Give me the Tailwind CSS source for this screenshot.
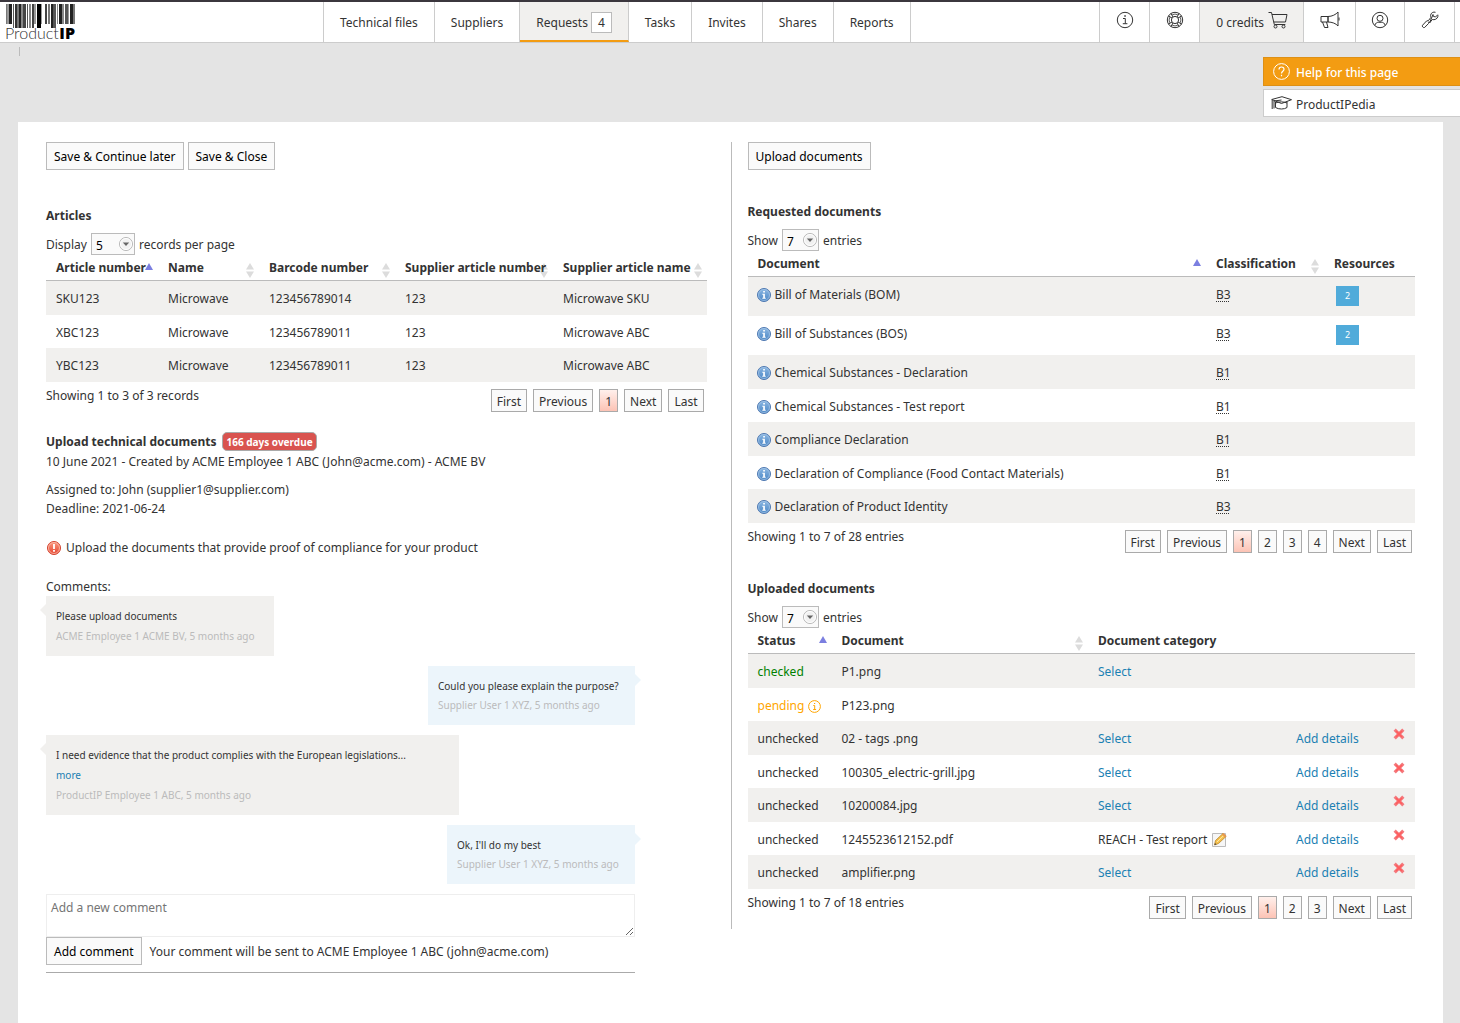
<!DOCTYPE html>
<html lang="en">
<head>
  <meta charset="UTF-8" />
  <meta name="viewport" content="width=device-width, initial-scale=1.0"/>
  <title>ProductIP | Requests</title>
  <script src="https://cdn.jsdelivr.net/npm/@tailwindcss/browser@4"></script>
</head>
<body class="min-h-screen flex flex-col bg-[#e4e4e4] text-[#333] text-[12px] leading-5 font-['Noto_Sans','Open_Sans',sans-serif]">

<!-- SHARED ICONS -->
<svg class="absolute w-0 h-0" aria-hidden="true">
  <defs>
    <linearGradient id="blueFill" x1="0" y1="0" x2="0" y2="1">
      <stop offset="0" stop-color="#8db8e3"/><stop offset="1" stop-color="#4a86c5"/>
    </linearGradient>
    <linearGradient id="redFill" x1="0" y1="0" x2="0" y2="1">
      <stop offset="0" stop-color="#fb9a80"/><stop offset="1" stop-color="#e5432f"/>
    </linearGradient>
  </defs>
  <symbol id="info" viewBox="0 0 14 14">
    <circle cx="7" cy="7" r="6.5" fill="url(#blueFill)" stroke="#4f78b0"/>
    <circle cx="7" cy="7" r="5.5" fill="none" stroke="#a9c8e8" stroke-width=".7"/>
    <path d="M6.2 3h1.7v1.6H6.2zM5.3 5.700h2.600v4h.8v1H5.300v-1h.9v-3h-.9z" fill="#fff"/>
  </symbol>
  <symbol id="sort" viewBox="0 0 8 15">
    <path d="M4 0l4 6.500H0zM0 8.500h8L4 15z" fill="#dcdcdc"/>
  </symbol>
  <symbol id="sortUp" viewBox="0 0 8 15">
    <path d="M4 0l4 7H0z" fill="#7b7fe0"/>
  </symbol>
  <symbol id="selectArrow" viewBox="0 0 14 14">
    <circle cx="7" cy="7" r="6.500" fill="#f1f1f1" stroke="#b5b5b5"/>
    <circle cx="7" cy="7" r="5.500" fill="none" stroke="#fff"/>
    <path d="M3.800 5.500h6.400L7 9z" fill="#666"/>
  </symbol>
  <symbol id="cross" viewBox="0 0 12 12">
    <path d="M2.800 2.800l6.400 6.400M9.200 2.800L2.800 9.200" stroke="#f4787c" stroke-width="3.200" stroke-linecap="square"/>
    <path d="M3 3l6 6M9 3L3 9" stroke="#ff5d5d" stroke-width="1.600"/>
  </symbol>
</svg>

<!-- TOP BAR -->
<header class="flex h-[43px] bg-white border-t-2 border-t-[#3b373e] border-b border-b-[#ccc]">
  <a href="#" class="w-[323px] shrink-0 pl-[5px] pt-[2px]">
    <svg width="80" height="38" viewBox="0 0 80 38" role="img" aria-label="ProductIP">
      <g id="bars"></g>
      <text x="0" y="35" font-size="16" font-weight="300" fill="#333" font-family="Lato">Product</text>
      <text x="70" y="35" text-anchor="end" font-size="16" font-weight="800" fill="#000" font-family="Open Sans">IP</text>
    </svg>
  </a>
  <nav class="flex border-l border-[#ccc]">
    <a href="#" class="flex items-center px-4 pt-px border-r border-[#ccc]">Technical files</a>
    <a href="#" class="flex items-center px-4 pt-px border-r border-[#ccc]">Suppliers</a>
    <a href="#" class="flex items-center gap-[3px] px-4 pt-[3px] border-r border-r-[#ccc] border-b-2 border-b-[#f39c12] bg-[#f1f0ee]">Requests <span class="border border-[#bbb] bg-white px-[6px] leading-[19px]">4</span></a>
    <a href="#" class="flex items-center px-4 pt-px border-r border-[#ccc]">Tasks</a>
    <a href="#" class="flex items-center px-4 pt-px border-r border-[#ccc]">Invites</a>
    <a href="#" class="flex items-center px-4 pt-px border-r border-[#ccc]">Shares</a>
    <a href="#" class="flex items-center px-4 pt-px border-r border-[#ccc]">Reports</a>
  </nav>
  <div class="ml-auto mr-[5px] flex border-l border-[#ccc]">
    <a href="#" aria-label="Info" class="flex w-[50px] justify-center pt-[9px] border-r border-[#ccc]">
      <svg class="w-[18px] h-[18px]" viewBox="0 0 18 18" fill="none" stroke="#333"><circle cx="9" cy="9" r="7.700"/><path d="M7 7.500h2.300v5M6.800 12.700h4.600"/><path d="M8.300 4.300h1.500v1.500H8.300z" fill="#333" stroke="none"/></svg>
    </a>
    <a href="#" aria-label="Support" class="flex w-[50px] justify-center pt-[9px] border-r border-[#ccc]">
      <svg class="w-[18px] h-[18px]" viewBox="0 0 18 18" fill="none" stroke="#333"><circle cx="9" cy="9" r="7.700"/><circle cx="9" cy="9" r="3.600"/><path d="M5 2.500l2 3.500M2.500 5L6 7M13 2.500L11 6M15.500 5L12 7M5 15.500L7 12M2.500 13L6 11M13 15.500L11 12M15.500 13L12 11"/><path d="M6.200 3.800a6 6 0 0 1 5.600 0M6.200 14.200a6 6 0 0 0 5.600 0M3.800 6.200a6 6 0 0 0 0 5.600M14.200 6.200a6 6 0 0 1 0 5.600" stroke-width=".8"/></svg>
    </a>
    <a href="#" class="flex gap-1 pl-4 pr-[15px] pt-[9px] border-r border-[#ccc] bg-[#f1f0ee]"><span class="pt-[2px]">0 credits</span>
      <svg class="w-5 h-[18px]" viewBox="0 0 20 18" fill="none" stroke="#333"><path d="M.500 1.500h3l2.800 12h11M4 3.500h15l-1.500 7.500H5.800"/><circle cx="7.500" cy="15.500" r="1.500"/><circle cx="15.500" cy="15.500" r="1.500"/></svg>
    </a>
    <a href="#" aria-label="News" class="flex w-[52px] justify-center pt-[9px] border-r border-[#ccc]">
      <svg class="w-5 h-[18px]" viewBox="0 0 20 18" fill="none" stroke="#333"><path d="M8 5.500H1v5.500h7M8 5.500C12 5.500 16 3.500 18 1v14c-2-2.500-6-4-10-4zM19 6.500v3M2.500 11l2 5.500h3.500L6.500 11M8 5.500V11"/></svg>
    </a>
    <a href="#" aria-label="Account" class="flex w-[49px] justify-center pt-[9px] border-r border-[#ccc]">
      <svg class="w-[18px] h-[18px]" viewBox="0 0 18 18" fill="none" stroke="#333"><circle cx="9" cy="9" r="7.700"/><circle cx="9" cy="7.300" r="3"/><path d="M3.800 14.500c.5-2.500 2.400-3.200 3.400-3.200h3.600c1 0 2.900.7 3.400 3.200"/></svg>
    </a>
    <a href="#" aria-label="Settings" class="flex w-[50px] justify-center pt-[9px] border-r border-[#ccc]">
      <svg class="w-[18px] h-[18px]" viewBox="0 0 18 18" fill="none" stroke="#333"><path d="M14.500 1.300c-2-.8-4.700.5-4.900 3 0 .9 0 1.500.3 2.100L7.500 9.500l-2 .5-4 4.300c-.8.900.9 3 2.100 2.200L7.500 12.500l.5-2M8.500 12l2.800-3.500c2 .8 5.200-.5 5.600-3.100.1-.7 0-1-.2-1.600l-2.200 2.200-2.200-.7-.3-1.800z"/></svg>
    </a>
  </div>
</header>

<!-- HELP LINKS -->
<div class="flex justify-between h-[79px] pl-[18px]">
  <span class="mt-1 ml-px w-px h-[9px] bg-[#bbb]"></span>
  <div class="w-[197px] mt-[14px] flex flex-col gap-[3px]">
    <a href="#" class="flex items-center gap-[6px] h-[29px] pl-[9px] border border-r-0 border-[#dd9016] bg-[#f39c12] text-white font-medium">
      <svg class="w-[17px] h-[17px]" viewBox="0 0 17 17" fill="none" stroke="#fff"><circle cx="8.500" cy="8.500" r="7.900"/><path d="M6 6.500c0-3.300 5-3.300 5-.3 0 2-2.500 2-2.500 4.300M8.500 11.800v1.500" stroke-width="1.200"/></svg>
      <span class="pt-[2px]">Help for this page</span>
    </a>
    <a href="#" class="flex items-center gap-1 h-7 pl-[7px] border border-r-0 border-[#ccc] bg-white">
      <svg class="w-[21px] h-[14px]" viewBox="0 0 21 14" fill="none" stroke="#333"><path d="M.700 3.500L11 .700l9.500 3L10.500 7.500zM4.500 6v5.500c3 2 9 2 11.500 0V5.500M4.500 7c3-1.500 8.500-1.500 11.500 0M1.200 4v9M3 5v7.500M3 5l7.500-1"/></svg>
      <span class="pt-[3px]">ProductIPedia</span>
    </a>
  </div>
</div>

<!-- CONTENT -->
<main class="flex-1 flex items-start ml-[18px] mr-[17px] px-7 py-5 bg-white">

  <!-- Left column -->
  <div class="w-1/2 pr-6">
    <div class="flex gap-1">
      <button class="h-7 px-[7px] pt-[2px] border border-[#bbb] bg-[#fafafa] text-black">Save &amp; Continue later</button>
      <button class="h-7 px-[7px] pt-[2px] border border-[#bbb] bg-[#fafafa] text-black">Save &amp; Close</button>
    </div>

    <h3 class="mt-9 font-bold">Articles</h3>
    <label class="flex items-end gap-1 mt-[7px] h-[22px]">Display
      <span class="relative flex">
        <select class="appearance-none w-11 h-[22px] pl-1 pt-[2px] border border-[#bbb] bg-[#fafafa] text-black"><option>5</option><option>10</option><option>25</option></select>
        <svg class="absolute right-[2px] top-1 w-[14px] h-[14px] pointer-events-none"><use href="#selectArrow"/></svg>
      </span>
      records per page</label>
    <table class="w-full table-fixed text-left border-separate border-spacing-0">
      <thead>
        <tr class="h-[26px] whitespace-nowrap *:border-b *:border-[#bbb]">
          <th class="relative w-[112px] pl-[10px]">Article number<svg class="absolute right-[5px] top-2 w-2 h-[15px]"><use href="#sortUp"/></svg></th>
          <th class="relative w-[101px] pl-[10px]">Name<svg class="absolute right-[5px] top-2 w-2 h-[15px]"><use href="#sort"/></svg></th>
          <th class="relative w-[136px] pl-[10px]">Barcode number<svg class="absolute right-[5px] top-2 w-2 h-[15px]"><use href="#sort"/></svg></th>
          <th class="relative w-[158px] pl-[10px]"><svg class="absolute right-[5px] top-2 w-2 h-[15px]"><use href="#sort"/></svg><span class="relative">Supplier article number</span></th>
          <th class="relative pl-[10px]">Supplier article name<svg class="absolute right-[5px] top-2 w-2 h-[15px]"><use href="#sort"/></svg></th>
        </tr>
      </thead>
      <tbody id="articleRows"></tbody>
    </table>
    <div class="flex justify-between items-start">
      <p class="pt-1">Showing 1 to 3 of 3 records</p>
      <div class="flex gap-[6px] pt-[7px] pr-[3px]" data-pages="1"></div>
    </div>

    <div class="mt-5 flex items-start gap-[6px]">
      <h3 class="font-bold">Upload technical documents</h3>
      <span class="h-[19px] px-[3px] border border-[#aaa] rounded-[5px] bg-[#d9534f] text-white text-[10px] leading-[18px] font-bold">166 days overdue</span>
    </div>
    <p>10 June 2021 - Created by ACME Employee 1 ABC (John@acme.com) - ACME BV</p>
    <p class="mt-2 leading-[19px]">Assigned to: John (supplier1@supplier.com)<br />Deadline: 2021-06-24</p>
    <p class="mt-5 flex items-center gap-1 leading-[19px]">
      <svg class="w-4 h-4" viewBox="0 0 16 16"><circle cx="8" cy="8" r="6.500" fill="url(#redFill)" stroke="#d2422e"/><circle cx="8" cy="8" r="5.500" fill="none" stroke="#fcc0b0" stroke-width=".8"/><path d="M7.100 4h1.800v5H7.100zM7.100 10h1.800v1.800H7.100z" fill="#fff"/></svg>
      Upload the documents that provide proof of compliance for your product</p>
    <p class="mt-5">Comments:</p>

    <div class="w-[589px] max-w-full -mt-px pb-[7px] border-b border-[#aaa]">
      <div class="flex flex-col gap-[10px] text-[10px]">
        <div class="relative self-start min-w-[228px] p-[10px] bg-[#f1f0ee]">
          <svg class="absolute -left-[6px] top-2 w-[6px] h-3" viewBox="0 0 6 12"><path d="M6 0v12L0 6z" fill="#f1f0ee"/></svg>
          <p class="leading-5">Please upload documents</p>
          <p class="leading-5 text-[#bbb]">ACME Employee 1 ACME BV, 5 months ago</p>
        </div>
        <div class="relative self-end min-w-[207px] p-[10px] bg-[#ecf5fb]">
          <svg class="absolute -right-[6px] top-2 w-[6px] h-3" viewBox="0 0 6 12"><path d="M0 0v12l6-6z" fill="#ecf5fb"/></svg>
          <p class="leading-5">Could you please explain the purpose?</p>
          <p class="leading-[19px] text-[#bbb]">Supplier User 1 XYZ, 5 months ago</p>
        </div>
        <div class="relative self-start min-w-[413px] p-[10px] bg-[#f1f0ee]">
          <svg class="absolute -left-[6px] top-2 w-[6px] h-3" viewBox="0 0 6 12"><path d="M6 0v12L0 6z" fill="#f1f0ee"/></svg>
          <p class="leading-5">I need evidence that the product complies with the European legislations...<br /><a href="#" class="text-[#1b80b3]">more</a></p>
          <p class="leading-5 text-[#bbb]">ProductIP Employee 1 ABC, 5 months ago</p>
        </div>
        <div class="relative self-end min-w-[188px] p-[10px] bg-[#ecf5fb]">
          <svg class="absolute -right-[6px] top-2 w-[6px] h-3" viewBox="0 0 6 12"><path d="M0 0v12l6-6z" fill="#ecf5fb"/></svg>
          <p class="leading-5">Ok, I'll do my best</p>
          <p class="leading-[19px] text-[#bbb]">Supplier User 1 XYZ, 5 months ago</p>
        </div>
      </div>
      <textarea aria-label="Add a new comment" placeholder="Add a new comment" class="block w-full h-[43px] mt-[10px] px-1 py-[3px] border border-[#eee] placeholder-[#757575]"></textarea>
      <div class="flex items-center gap-2">
        <button class="h-7 px-[7px] pt-[2px] border border-[#bbb] bg-[#fafafa] text-black">Add comment</button>
        <span class="pt-[2px]">Your comment will be sent to ACME Employee 1 ABC (john@acme.com)</span>
      </div>
    </div>
  </div>

  <!-- Right column -->
  <div class="w-1/2 pl-4 pb-[10px] border-l border-[#bbb]">
    <button class="block h-7 px-[7px] pt-[2px] border border-[#bbb] bg-[#fafafa] text-black">Upload documents</button>

    <h3 class="mt-8 font-bold">Requested documents</h3>
    <label class="flex items-end gap-1 mt-[7px] h-[22px]">Show
      <span class="relative flex">
        <select class="appearance-none w-[37px] h-[22px] pl-1 pt-[2px] border border-[#bbb] bg-[#fafafa] text-black"><option>7</option><option>10</option><option>25</option></select>
        <svg class="absolute right-[2px] top-1 w-[14px] h-[14px] pointer-events-none"><use href="#selectArrow"/></svg>
      </span>
      entries</label>
    <table class="w-full table-fixed text-left border-separate border-spacing-0">
      <thead>
        <tr class="h-[26px] whitespace-nowrap *:border-b *:border-[#bbb]">
          <th class="relative pl-[10px]">Document<svg class="absolute right-[5px] top-2 w-2 h-[15px]"><use href="#sortUp"/></svg></th>
          <th class="relative w-[118px] pl-[10px]">Classification<svg class="absolute right-[5px] top-2 w-2 h-[15px]"><use href="#sort"/></svg></th>
          <th class="w-[91px] pl-[10px]">Resources</th>
        </tr>
      </thead>
      <tbody id="requestedRows"></tbody>
    </table>
    <div class="flex justify-between items-start">
      <p class="pt-1">Showing 1 to 7 of 28 entries</p>
      <div class="flex gap-[6px] pt-[7px] pr-[3px]" data-pages="4"></div>
    </div>

    <h3 class="mt-[26px] font-bold">Uploaded documents</h3>
    <label class="flex items-end gap-1 mt-[7px] h-[22px]">Show
      <span class="relative flex">
        <select class="appearance-none w-[37px] h-[22px] pl-1 pt-[2px] border border-[#bbb] bg-[#fafafa] text-black"><option>7</option><option>10</option><option>25</option></select>
        <svg class="absolute right-[2px] top-1 w-[14px] h-[14px] pointer-events-none"><use href="#selectArrow"/></svg>
      </span>
      entries</label>
    <table class="w-full table-fixed text-left border-separate border-spacing-0">
      <thead>
        <tr class="h-[26px] whitespace-nowrap *:border-b *:border-[#bbb]">
          <th class="relative w-[84px] pl-[10px]">Status<svg class="absolute right-[5px] top-2 w-2 h-[15px]"><use href="#sortUp"/></svg></th>
          <th class="relative pl-[10px]">Document<svg class="absolute right-[5px] top-2 w-2 h-[15px]"><use href="#sort"/></svg></th>
          <th class="w-[198px] pl-[10px]">Document category</th>
          <th class="w-[93px]"></th>
          <th class="w-9"></th>
        </tr>
      </thead>
      <tbody id="uploadedRows"></tbody>
    </table>
    <div class="flex justify-between items-start">
      <p class="pt-1">Showing 1 to 7 of 18 entries</p>
      <div class="flex gap-[6px] pt-[7px] pr-[3px]" data-pages="3"></div>
    </div>
  </div>
</main>

<script>
const articles = [
  ["SKU123", "Microwave", "123456789014", "123", "Microwave SKU"],
  ["XBC123", "Microwave", "123456789011", "123", "Microwave ABC"],
  ["YBC123", "Microwave", "123456789011", "123", "Microwave ABC"]
];

const requested = [
  { name: "Bill of Materials (BOM)", cls: "B3", resources: 2 },
  { name: "Bill of Substances (BOS)", cls: "B3", resources: 2 },
  { name: "Chemical Substances - Declaration", cls: "B1" },
  { name: "Chemical Substances - Test report", cls: "B1" },
  { name: "Compliance Declaration", cls: "B1" },
  { name: "Declaration of Compliance (Food Contact Materials)", cls: "B1" },
  { name: "Declaration of Product Identity", cls: "B3" }
];

const uploaded = [
  { status: "checked", name: "P1.png", select: true },
  { status: "pending", name: "P123.png" },
  { status: "unchecked", name: "02 - tags .png", select: true, editable: true },
  { status: "unchecked", name: "100305_electric-grill.jpg", select: true, editable: true },
  { status: "unchecked", name: "10200084.jpg", select: true, editable: true },
  { status: "unchecked", name: "1245523612152.pdf", category: "REACH - Test report", editable: true },
  { status: "unchecked", name: "amplifier.png", select: true, editable: true }
];

const STATUS_HTML = {
  checked: `<span class="text-[#008000]">checked</span>`,
  pending: `<span class="flex items-center gap-1 text-[#ffa500]">pending
    <svg class="w-[13px] h-[13px]" viewBox="0 0 13 13" fill="none" stroke="#ffa500"><circle cx="6.500" cy="6.500" r="5.900"/><path d="M5.300 5.500h1.400v4M5.200 9.500h2.900M6 3.500h1.200"/></svg></span>`,
  unchecked: "unchecked"
};

const EDIT_ICON = `<svg class="w-4 h-4" viewBox="0 0 16 16"><path d="M1.500 1.500h13v13h-13z" fill="#f6f6f6" stroke="#bbb"/><path d="M3.500 13l1-4.500 7.500-7 3 3-7.500 7z" fill="#f5c04a" stroke="#b9852b" stroke-width=".8"/><path d="M6 10l7-6.800" stroke="#fde9a8"/><path d="M11 2.500l1.500-1.500 3 3L14 5.500z" fill="#e8974e"/><path d="M3.500 13l.5-2 1.500 1.400z" fill="#444"/></svg>`;

// Logo barcode: x, width, height, colour
const BARS = [
  [1, 1, 20, "#777"], [2, 2, 20, "#999"], [4, 3, 20, "#222"], [8, 1, 24, "#555"], [10, 2, 24, "#333"],
  [12, 2, 24, "#777"], [14, 2, 24, "#222"], [16, 2, 24, "#888"], [18, 3, 24, "#444"], [22, 1, 24, "#555"], [24, 2, 24, "#888"],
  [27, 2, 24, "#444"], [29, 2, 20, "#999"], [32, 4, 24, "#000"], [36, 1, 20, "#999"], [40, 2, 20, "#444"],
  [43, 2, 20, "#777"], [46, 2, 24, "#222"], [48, 3, 24, "#555"], [52, 1, 20, "#888"], [54, 3, 20, "#222"],
  [57, 2, 20, "#888"], [60, 3, 20, "#555"], [63, 1, 20, "#999"], [65, 3, 20, "#222"], [68, 2, 20, "#777"]
];

document.getElementById("bars").innerHTML = BARS.map(([x, w, h, c]) =>
  `<rect x="${x}" y="0" width="${w}" height="${h}" fill="${c}"/>`).join('');

document.getElementById("articleRows").innerHTML = articles.map(row => `
  <tr class="odd:h-[34px] even:h-[33px] odd:bg-[#f1f0ee] align-top">
    ${row.map(cell => `<td class="pl-[10px] pt-2">${cell}</td>`).join('')}
  </tr>
`).join('');

document.getElementById("requestedRows").innerHTML = requested.map(doc => `
  <tr class="${doc.resources ? "h-[39px]" : "odd:h-[34px] even:h-[33px]"} odd:bg-[#f1f0ee] align-top">
    <td class="pl-[9px] pt-2"><span class="flex items-center gap-1"><svg class="w-[14px] h-[14px]"><use href="#info"/></svg>${doc.name}</span></td>
    <td class="pl-[10px] pt-2"><abbr class="underline decoration-dotted decoration-1 underline-offset-2">${doc.cls}</abbr></td>
    <td class="pl-3 pt-[9px]">${doc.resources ? `<a href="#" class="block w-[23px] h-5 bg-[#50abda] text-white text-[9px] text-center">${doc.resources}</a>` : ""}</td>
  </tr>
`).join('');

document.getElementById("uploadedRows").innerHTML = uploaded.map(doc => `
  <tr class="odd:h-[34px] even:h-[33px] odd:bg-[#f1f0ee] align-top">
    <td class="pl-[10px] pt-2">${STATUS_HTML[doc.status]}</td>
    <td class="pl-[10px] pt-2">${doc.name}</td>
    <td class="pl-[10px] pt-2">${doc.select ? `<a href="#" class="text-[#1b80b3]">Select</a>` : ""}${doc.category ? `<span class="flex items-center gap-1">${doc.category} ${EDIT_ICON}</span>` : ""}</td>
    <td class="pl-[10px] pt-2">${doc.editable ? `<a href="#" class="text-[#1b80b3]">Add details</a>` : ""}</td>
    <td class="pl-[14px] pt-[7px]">${doc.editable ? `<button aria-label="Delete" class="block"><svg class="w-3 h-3"><use href="#cross"/></svg></button>` : ""}</td>
  </tr>
`).join('');

function pageButton(label) {
  const fill = label === "1" ? "bg-linear-to-b from-[#fff0ec] to-[#fcc3b5]" : "bg-[#fafafa]";
  return `<button class="h-[23px] px-[5px] pt-[2px] border border-[#aaa] ${fill}">${label}</button>`;
}

document.querySelectorAll("[data-pages]").forEach(el => {
  const pages = Array.from({ length: Number(el.dataset.pages) }, (_, i) => String(i + 1));
  el.innerHTML = ["First", "Previous", ...pages, "Next", "Last"].map(pageButton).join('');
});
</script>

</body>
</html>
